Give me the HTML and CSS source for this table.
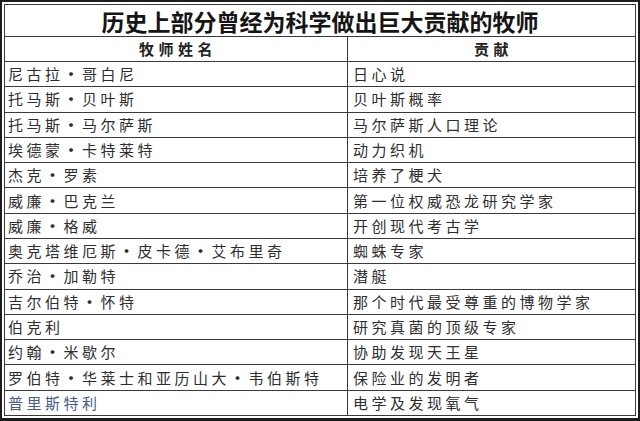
FILE: index.html
```html
<!DOCTYPE html>
<html lang="zh-CN">
<head>
<meta charset="utf-8">
<title>历史上部分曾经为科学做出巨大贡献的牧师</title>
<link rel="stylesheet" href="styles.css">
</head>
<body>
<div class="frame">
  <div class="sheet">
    <div class="title">历史上部分曾经为科学做出巨大贡献的牧师</div>
    <div class="head">牧师姓名</div>
    <div class="head">贡献</div>
    <div class="cell name">尼古拉<span class="dot">•</span>哥白尼</div>
    <div class="cell work">日心说</div>
    <div class="cell name">托马斯<span class="dot">•</span>贝叶斯</div>
    <div class="cell work">贝叶斯概率</div>
    <div class="cell name">托马斯<span class="dot">•</span>马尔萨斯</div>
    <div class="cell work">马尔萨斯人口理论</div>
    <div class="cell name">埃德蒙<span class="dot">•</span>卡特莱特</div>
    <div class="cell work">动力织机</div>
    <div class="cell name">杰克<span class="dot">•</span>罗素</div>
    <div class="cell work">培养了梗犬</div>
    <div class="cell name">威廉<span class="dot">•</span>巴克兰</div>
    <div class="cell work">第一位权威恐龙研究学家</div>
    <div class="cell name">威廉<span class="dot">•</span>格威</div>
    <div class="cell work">开创现代考古学</div>
    <div class="cell name">奥克塔维厄斯<span class="dot">•</span>皮卡德<span class="dot">•</span>艾布里奇</div>
    <div class="cell work">蜘蛛专家</div>
    <div class="cell name">乔治<span class="dot">•</span>加勒特</div>
    <div class="cell work">潜艇</div>
    <div class="cell name">吉尔伯特<span class="dot">•</span>怀特</div>
    <div class="cell work">那个时代最受尊重的博物学家</div>
    <div class="cell name">伯克利</div>
    <div class="cell work">研究真菌的顶级专家</div>
    <div class="cell name">约翰<span class="dot">•</span>米歇尔</div>
    <div class="cell work">协助发现天王星</div>
    <div class="cell name">罗伯特<span class="dot">•</span>华莱士和亚历山大<span class="dot">•</span>韦伯斯特</div>
    <div class="cell work">保险业的发明者</div>
    <div class="cell name last">普里斯特利</div>
    <div class="cell work">电学及发现氧气</div>
  </div>
</div>
</body>
</html>
```

FILE: styles.css
```css
html, body {
  margin: 0;
  padding: 0;
  background: #ffffff;
}

body {
  width: 640px;
  height: 421px;
  font-family: "Noto Sans CJK SC", "Noto Sans", sans-serif;
}

.frame {
  box-sizing: border-box;
  width: 640px;
  height: 421px;
  border: 2px solid #1e1e1e;
  border-bottom-width: 3px;
  padding: 2px;
  background: #ffffff;
}

.sheet {
  box-sizing: border-box;
  height: 100%;
  display: grid;
  grid-template-columns: 342px 1fr;
  grid-template-rows: 31px 24px repeat(14, 1fr);
  gap: 1px;
  padding: 1px;
  background: #3a3a3a;
}

.sheet > div {
  background: #ffffff;
  display: flex;
  align-items: center;
  white-space: nowrap;
}

.title {
  grid-column: 1 / 3;
  justify-content: center;
  font-size: 23px;
  font-weight: 700;
  color: #151515;
  line-height: 28px;
}

.head {
  justify-content: center;
  font-size: 15px;
  font-weight: 700;
  color: #222222;
  letter-spacing: 4.5px;
  padding-left: 4px;
  line-height: 20px;
}

.cell {
  font-size: 15px;
  color: #2e2e2e;
  letter-spacing: 3.5px;
  line-height: 20px;
}

.name {
  padding-left: 3px;
}

.work {
  padding-left: 5px;
}

.dot {
  display: inline-block;
  width: 15px;
  margin-right: 3.5px;
  letter-spacing: 0;
  text-align: center;
  font-weight: 700;
}

.last {
  color: #4a5b8c;
}
```
